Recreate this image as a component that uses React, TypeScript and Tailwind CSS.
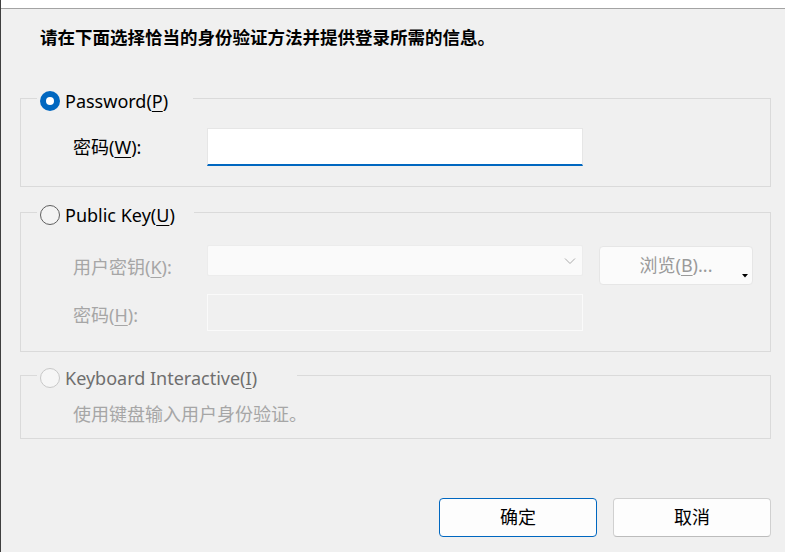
import React from "react";

const FONT = "font-['Noto_Sans','Noto_Sans_CJK_SC',sans-serif]";

function U({ c }: { c: string }) {
  return <span className="underline underline-offset-[3px] decoration-1">{c}</span>;
}

function RadioChecked() {
  return (
    <span className="w-[20px] h-[20px] rounded-full bg-[#0067c0] flex items-center justify-center shrink-0">
      <span className="w-[8px] h-[8px] rounded-full bg-white" />
    </span>
  );
}

function RadioOff({ disabled }: { disabled?: boolean }) {
  return (
    <span
      className={
        disabled
          ? "w-[20px] h-[20px] rounded-full border border-[#c8c8c8] bg-[#f6f6f6] shrink-0"
          : "w-[20px] h-[20px] rounded-full border border-[#5f5f5f] bg-[#f3f3f3] shrink-0"
      }
    />
  );
}

export default function App() {
  return (
    <div className={`w-[785px] h-[552px] bg-[#f0f0f0] flex flex-col border-l border-[#3f3f3f] overflow-hidden ${FONT}`}>
      <div className="h-[9px] bg-white border-b border-[#a3a3a3] shrink-0" />

      <div className="pt-[16px] pl-[39px] leading-[24px] text-[17.5px] font-bold text-black">
        请在下面选择恰当的身份验证方法并提供登录所需的信息。
      </div>

      {/* Password group */}
      <fieldset className="mt-[35px] ml-[19px] mr-[14px] border border-[#dadada] p-0">
        <legend className="ml-[16px] pl-[3px] pr-[25px] pt-[6px]">
          <span className="flex items-center gap-[5px] h-[22px] text-[18px] text-black leading-[22px]">
            <RadioChecked />
            <span>
              Password(<U c="P" />)
            </span>
          </span>
        </legend>
        <div className="flex items-center pl-[52px] pt-[16px] pb-[20px]">
          <span className="w-[134px] text-[18px] leading-[22px] text-black">
            密码(<U c="W" />):
          </span>
          <div className="w-[376px] h-[38px] bg-white border border-[#e6e6e6] border-b-2 border-b-[#0067c0]" />
        </div>
      </fieldset>

      {/* Public key group */}
      <fieldset className="mt-[11px] ml-[19px] mr-[14px] border border-[#dadada] p-0">
        <legend className="ml-[16px] pl-[3px] pr-[19px] pt-[6px]">
          <span className="flex items-center gap-[5px] h-[22px] text-[18px] text-black leading-[22px]">
            <RadioOff />
            <span>
              Public Key(<U c="U" />)
            </span>
          </span>
        </legend>
        <div className="flex flex-col pl-[52px] pt-[19px] pb-[20px]">
          <div className="flex items-start h-[40px]">
            <span className="w-[134px] mt-[11px] text-[18px] leading-[22px] text-[#a6a6a6]">
              用户密钥(<U c="K" />):
            </span>
            <div className="w-[376px] h-[31px] bg-[#fafafa] border border-[#ececec] rounded-[2px] flex items-center justify-end pr-[6px]">
              <svg width="12" height="8" viewBox="0 0 12 8" fill="none">
                <path d="M1 1.5 L6 6.5 L11 1.5" stroke="#ababab" strokeWidth="1" />
              </svg>
            </div>
            <div className="relative ml-[16px] mt-[1px] w-[154px] h-[39px] bg-[#fbfbfb] border border-[#e6e6e6] rounded-[4px] flex items-center justify-center text-[18px] text-[#9a9a9a]">
              浏览(<U c="B" />)...
              <svg className="absolute right-[4px] bottom-[6px]" width="6" height="4" viewBox="0 0 6 4">
                <path d="M0 0 H6 L3 3.5 Z" fill="#000" />
              </svg>
            </div>
          </div>
          <div className="flex items-start mt-[9px] h-[37px]">
            <span className="w-[134px] mt-[10px] text-[18px] leading-[22px] text-[#a6a6a6]">
              密码(<U c="H" />):
            </span>
            <div className="w-[376px] h-[37px] bg-[#f0f0f0] border border-[#fafafa]" />
          </div>
        </div>
      </fieldset>

      {/* Keyboard interactive */}
      <fieldset className="mt-[9px] ml-[19px] mr-[14px] border border-[#dadada] p-0">
        <legend className="ml-[16px] pl-[3px] pr-[40px] pt-[6px]">
          <span className="flex items-center gap-[5px] h-[22px] text-[18px] text-[#6e6e6e] leading-[22px]">
            <RadioOff disabled />
            <span>
              Keyboard Interactive(<U c="I" />)
            </span>
          </span>
        </legend>
        <div className="pl-[52px] pt-[14px] pb-[13px] text-[18px] leading-[22px] text-[#a6a6a6]">
          使用键盘输入用户身份验证。
        </div>
      </fieldset>

      <div className="mt-auto flex justify-end gap-[16px] pr-[14px] pb-[15px]">
        <button className="w-[158px] h-[39px] bg-[#fdfdfd] border border-[#0067c0] rounded-[4px] text-[18px] text-black">
          确定
        </button>
        <button className="w-[158px] h-[39px] bg-[#fdfdfd] border border-[#d0d0d0] border-b-[#bcbcbc] rounded-[4px] text-[18px] text-black">
          取消
        </button>
      </div>
    </div>
  );
}
